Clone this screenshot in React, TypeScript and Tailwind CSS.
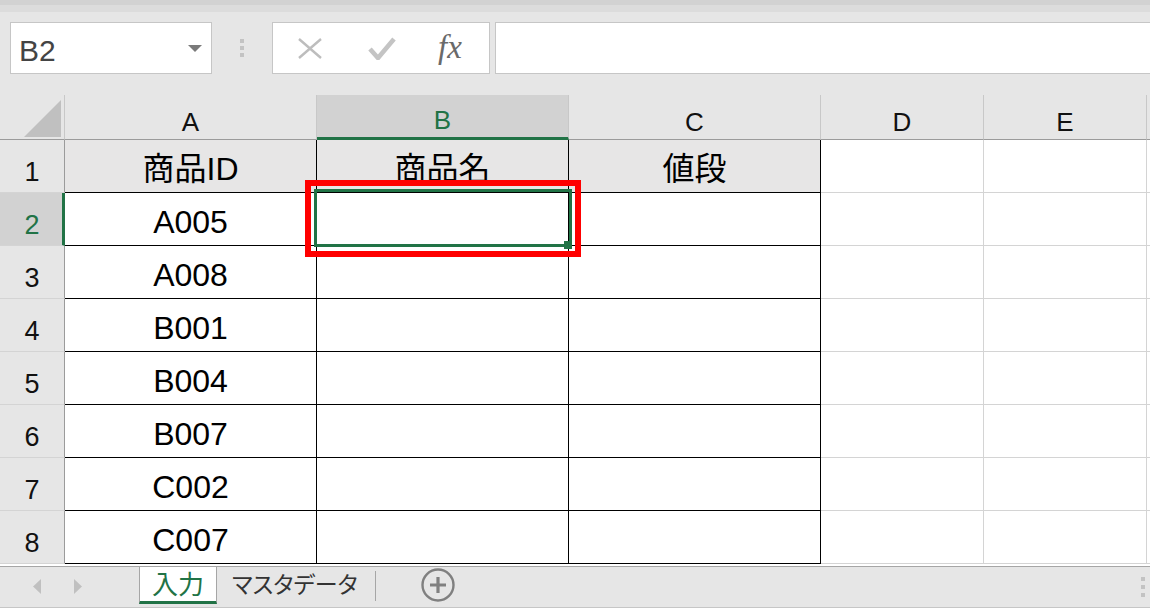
import React from 'react';

const GREEN = '#217346';

const rows: string[][] = [
  ['商品ID', '商品名', '値段'],
  ['A005', '', ''],
  ['A008', '', ''],
  ['B001', '', ''],
  ['B004', '', ''],
  ['B007', '', ''],
  ['C002', '', ''],
  ['C007', '', ''],
];

// bordered table columns A..C, then plain grid columns D, E
const tableCols = ['A', 'B', 'C'];
const plainCols = ['D', 'E'];

const NameBox = () => (
  <div className="flex h-[52px] w-[202px] shrink-0 items-center justify-between border border-[#c6c6c6] bg-white pl-[8px] pr-[9px]">
    <span className="pt-[5px] text-[30px] leading-none text-[#444]">B2</span>
    <svg width="14" height="7" viewBox="0 0 14 7">
      <polygon points="0,0 14,0 7,7" fill="#7a7a7a" />
    </svg>
  </div>
);

const FormulaButtons = () => (
  <div className="flex h-[52px] w-[218px] shrink-0 items-center border border-[#c6c6c6] bg-white">
    <svg className="ml-[25px]" width="24" height="21" viewBox="0 0 24 21">
      <path d="M1 1 L23 20 M23 1 L1 20" stroke="#bdbdbd" strokeWidth="2.4" fill="none" />
    </svg>
    <svg className="ml-[46px]" width="28" height="23" viewBox="0 0 28 23">
      <polyline points="2,12 10,21 26,2" stroke="#c4c4c4" strokeWidth="4.6" fill="none" />
    </svg>
    <span className="ml-[42px] pb-[2px] font-['Liberation_Serif',serif] text-[33px] italic leading-none text-[#6a6a6a]">
      fx
    </span>
  </div>
);

const Toolbar = () => (
  <div>
    <div className="h-[5px] bg-[#d2d2d2]" />
    <div className="h-[7px] bg-[#dcdcdc]" />
    <div className="flex items-center pl-[10px] pt-[10px]">
      <NameBox />
      <div className="ml-[28px] flex w-[4px] flex-col gap-[3px]">
        <div className="h-[4px] w-[4px] bg-[#c3c3c3]" />
        <div className="h-[4px] w-[4px] bg-[#c3c3c3]" />
        <div className="h-[4px] w-[4px] bg-[#c3c3c3]" />
      </div>
      <div className="ml-[28px]">
        <FormulaButtons />
      </div>
      <div className="-mr-[4px] ml-[5px] h-[52px] flex-1 border border-[#c6c6c6] bg-white" />
    </div>
    <div className="h-[21px]" />
  </div>
);

const HeaderRow = () => (
  <div className="flex h-[45px] bg-[#e6e6e6]">
    <div className="flex w-[65px] shrink-0 items-end justify-end border-b border-r border-b-[#9b9b9b] border-r-[#c8c8c8] pb-[2px] pr-[3px]">
      <svg width="37" height="37" viewBox="0 0 37 37">
        <polygon points="37,0 37,37 0,37" fill="#c0c0c0" />
      </svg>
    </div>
    {tableCols.map((c) => (
      <div
        key={c}
        className={
          c === 'B'
            ? 'flex w-[252px] shrink-0 items-center justify-center border-r border-r-[#c8c8c8] border-b-[3px] border-b-[#217346] bg-[#d2d2d2] pt-[7px] text-[26px] leading-none text-[#217346]'
            : 'flex w-[252px] shrink-0 items-center justify-center border-r border-b border-r-[#c8c8c8] border-b-[#9b9b9b] pt-[9px] text-[26px] leading-none text-[#111]'
        }
      >
        {c}
      </div>
    ))}
    {plainCols.map((c) => (
      <div
        key={c}
        className="flex w-[163px] shrink-0 items-center justify-center border-r border-b border-r-[#c8c8c8] border-b-[#9b9b9b] pt-[9px] text-[26px] leading-none text-[#111]"
      >
        {c}
      </div>
    ))}
    <div className="flex-1 border-b border-b-[#9b9b9b]" />
  </div>
);

const DataRow = ({ index, cells }: { index: number; cells: string[] }) => {
  const selected = index === 2;
  const isHead = index === 1;
  return (
    <div className="flex h-[53px]">
      <div
        className={
          selected
            ? 'flex w-[65px] shrink-0 items-center justify-center border-b border-b-[#d4d4d4] border-r-[3px] border-r-[#217346] bg-[#d2d2d2] pl-[2px] pt-[12px] text-[27px] leading-none text-[#217346]'
            : 'flex w-[65px] shrink-0 items-center justify-center border-b border-r border-b-[#d4d4d4] border-r-[#9b9b9b] bg-[#e6e6e6] pt-[12px] text-[27px] leading-none text-[#111]'
        }
      >
        {index}
      </div>
      {cells.map((text, i) => (
        <div
          key={i}
          className={
            isHead
              ? 'flex w-[252px] shrink-0 items-center justify-center border-b border-r border-black bg-[#e7e6e6] pt-[6px] text-[32px] leading-none text-black'
              : 'flex w-[252px] shrink-0 items-center justify-center border-b border-r border-black bg-white pt-[6px] text-[32px] leading-none text-black'
          }
        >
          {text}
        </div>
      ))}
      <div className="w-[163px] shrink-0 border-b border-r border-[#d4d4d4] bg-white" />
      <div className="w-[163px] shrink-0 border-b border-r border-[#d4d4d4] bg-white" />
      <div className="flex-1 border-b border-[#d4d4d4] bg-white" />
    </div>
  );
};

const Sheet = () => (
  <div className="relative h-[471px] overflow-hidden bg-white">
    <HeaderRow />
    {rows.map((cells, i) => (
      <DataRow key={i} index={i + 1} cells={cells} />
    ))}

    {/* active cell B2 with fill handle */}
    <div className="absolute left-[314px] top-[94px] h-[58px] w-[258px] border-[3px] border-[#217346]" />
    <div className="absolute left-[564px] top-[146px] h-[8px] w-[8px] bg-[#217346]" />

    {/* red highlight frame */}
    <div className="absolute left-[305px] top-[85px] h-[77px] w-[276px] border-[6px] border-[#ff0000]" />
  </div>
);

const TabBar = () => (
  <div className="flex h-[42px] border-t border-b border-t-[#a6a6a6] border-b-[#c6c6c6] bg-[#e6e6e6]">
    <div className="flex w-[139px] shrink-0 items-center pl-[33px] pb-[1px]">
      <svg width="8" height="15" viewBox="0 0 8 15">
        <polygon points="8,0 8,15 0,7.5" fill="#c0c0c0" />
      </svg>
      <svg className="ml-[33px]" width="8" height="15" viewBox="0 0 8 15">
        <polygon points="0,0 0,15 8,7.5" fill="#c0c0c0" />
      </svg>
    </div>
    <div
      className="flex h-[37px] w-[78px] shrink-0 items-center justify-center border-x border-x-[#a6a6a6] border-b-[3px] bg-white pt-[2px] text-[26px] leading-none text-[#217346]"
      style={{ borderBottomColor: GREEN }}
    >
      入力
    </div>
    <div className="flex w-[158px] shrink-0 items-center pl-[15px] pb-[4px] text-[23px] leading-none text-[#333] [font-feature-settings:'palt']">
      マスタデータ
    </div>
    <div className="mt-[4px] h-[30px] w-px bg-[#a6a6a6]" />
    <div className="ml-[45px] flex items-center pb-[4px]">
      <svg width="34" height="34" viewBox="0 0 34 34">
        <circle cx="17" cy="17" r="15.5" stroke="#808080" strokeWidth="2.4" fill="none" />
        <path d="M17 9 V25 M9 17 H25" stroke="#808080" strokeWidth="3.2" />
      </svg>
    </div>
    <div className="flex-1" />
    <div className="flex flex-col gap-[4px] pr-[5px] pt-[10px]">
      <div className="h-[4px] w-[4px] bg-[#c3c3c3]" />
      <div className="h-[4px] w-[4px] bg-[#c3c3c3]" />
      <div className="h-[4px] w-[4px] bg-[#c3c3c3]" />
    </div>
  </div>
);

export default function App() {
  return (
    <div className="flex h-[608px] w-[1150px] flex-col overflow-hidden bg-[#e6e6e6] font-['Liberation_Sans','Noto_Sans_CJK_JP',sans-serif]">
      <Toolbar />
      <Sheet />
      <TabBar />
    </div>
  );
}
